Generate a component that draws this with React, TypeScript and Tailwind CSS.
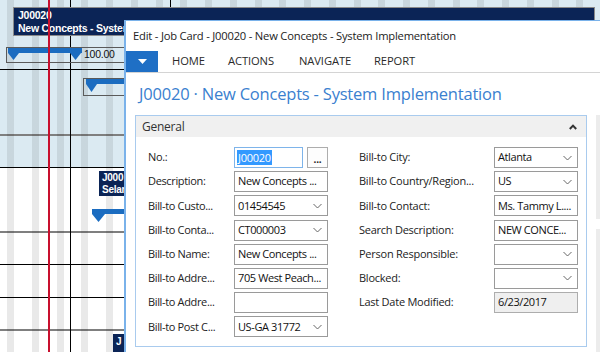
import React from "react";

const font = "font-['Open_Sans',sans-serif]";

type Field = { label: string; value: string; dd?: boolean; ro?: boolean; sel?: boolean };

const leftFields: Field[] = [
  { label: "No.:", value: "J00020", sel: true },
  { label: "Description:", value: "New Concepts ..." },
  { label: "Bill-to Custo...", value: "01454545", dd: true },
  { label: "Bill-to Conta...", value: "CT000003", dd: true },
  { label: "Bill-to Name:", value: "New Concepts ..." },
  { label: "Bill-to Addre...", value: "705 West Peach..." },
  { label: "Bill-to Addre...", value: "" },
  { label: "Bill-to Post C...", value: "US-GA 31772", dd: true },
];

const rightFields: Field[] = [
  { label: "Bill-to City:", value: "Atlanta", dd: true },
  { label: "Bill-to Country/Region...", value: "US", dd: true },
  { label: "Bill-to Contact:", value: "Ms. Tammy L...." },
  { label: "Search Description:", value: "NEW CONCE..." },
  { label: "Person Responsible:", value: "", dd: true },
  { label: "Blocked:", value: "", dd: true },
  { label: "Last Date Modified:", value: "6/23/2017", ro: true },
];

function Chevron() {
  return (
    <svg width="9" height="6" viewBox="0 0 9 6" className="shrink-0">
      <path d="M0.5 1 L4.5 5 L8.5 1" fill="none" stroke="#666" strokeWidth="1" />
    </svg>
  );
}

function Input({ f, width }: { f: Field; width: string }) {
  if (f.sel) {
    return (
      <div className="flex items-center gap-[4px]">
        <div className="flex h-[21px] w-[69px] items-center border border-[#7eb4ea] bg-white pl-[2px]">
          <span className="bg-[#3399ff] px-[1px] leading-[15px] text-white">{f.value}</span>
        </div>
        <div className="flex h-[21px] w-[21px] items-end justify-center border border-[#adadad] bg-[#fdfdfd] pb-[3px] text-[10px] font-bold leading-none text-[#222]">
          ...
        </div>
      </div>
    );
  }
  return (
    <div
      className={`flex h-[21px] items-center justify-between overflow-hidden border pl-[3px] pr-[5px] ${width} ${
        f.ro ? "border-[#adadad] bg-[#efefef]" : "border-[#9a9a9a] bg-white"
      }`}
    >
      <span className="whitespace-nowrap tracking-[-0.4px] text-[#111]">{f.value}</span>
      {f.dd && <Chevron />}
    </div>
  );
}

function Gantt() {
  return (
    <div className="absolute inset-0">
      <div className="flex flex-col">
        <div className="h-[70px] border-b border-black bg-[#dbeaf2]" />
        <div className="h-[66px] border-b-2 border-[#7f7f7f] bg-[#dbeaf2]" />
        <div className="h-[32px] border-b border-black bg-[#dbeaf2]" />
        <div className="h-[65px] border-b-2 border-[#7f7f7f] bg-white" />
        <div className="h-[32px] border-b border-black bg-white" />
        <div className="h-[33px] border-b border-black bg-white" />
        <div className="h-[33px] border-b-2 border-[#7f7f7f] bg-white" />
        <div className="h-[30px] bg-white" />
      </div>
      {/* day stripes */}
      <div className="absolute inset-0 bg-[image:repeating-linear-gradient(90deg,transparent_0_7px,rgba(0,0,0,0.085)_7px_14px,transparent_14px_24.75px)]" />
      {/* grid lines */}
      <div className="absolute left-[70px] top-0 bottom-0 w-px bg-black" />
      <div className="absolute left-[170px] top-0 bottom-0 w-px bg-black" />

      {/* job label */}
      <div className="absolute left-[13px] top-[7px] h-[29px] w-[582px] border border-[#8a8a8a] bg-[#0b2456] px-[4px] pt-[1px] font-['Liberation_Sans',sans-serif] text-[10.5px] font-bold leading-[13px] text-white">
        <div>J00020</div>
        <div className="w-[106px] overflow-hidden whitespace-nowrap">New Concepts - System Implementation</div>
      </div>

      {/* bar 1 */}
      <div className="absolute left-[6px] top-[47px] h-[16px] w-[140px] border border-[#5a5a5a]" />
      <svg className="absolute left-[8px] top-[48px]" width="74" height="13" viewBox="0 0 74 13">
        <rect x="0" y="0" width="74" height="5" fill="#1b6cc0" />
        <polygon points="0,5 11,5 5.5,12" fill="#1b6cc0" />
        <polygon points="62,5 73,5 67.5,12" fill="#1b6cc0" />
      </svg>
      <div className="absolute left-[84px] top-[48px] font-['Liberation_Sans',sans-serif] text-[10.5px] leading-[13px] text-[#111]">
        100.00
      </div>

      {/* bar 2 */}
      <div className="absolute left-[83px] top-[78px] h-[18px] w-[60px] border border-[#5a5a5a]" />
      <svg className="absolute left-[86px] top-[79px]" width="40" height="14" viewBox="0 0 40 14">
        <rect x="0" y="0" width="40" height="5" fill="#1b6cc0" />
        <polygon points="0,5 11,5 5.5,13" fill="#1b6cc0" />
      </svg>

      {/* job 2 */}
      <div className="absolute left-[99px] top-[171px] h-[25px] w-[25px] overflow-hidden whitespace-nowrap bg-[#0b2456] pl-[3px] pt-[1px] font-['Liberation_Sans',sans-serif] text-[10px] font-bold leading-[12px] text-white">
        <div>J000</div>
        <div>Selan</div>
      </div>
      <svg className="absolute left-[92px] top-[209px]" width="40" height="14" viewBox="0 0 40 14">
        <rect x="0" y="0" width="40" height="5" fill="#1b6cc0" />
        <polygon points="0,5 13,5 6.5,13" fill="#1b6cc0" />
      </svg>

      {/* job 3 */}
      <div className="absolute left-[113px] top-[334px] h-[22px] w-[11px] overflow-hidden whitespace-nowrap bg-[#0b2456] pl-[3px] pt-[2px] font-['Liberation_Sans',sans-serif] text-[10px] font-bold leading-[12px] text-white">
        <div>J</div>
      </div>

      {/* today line */}
      <div className="absolute left-[48px] top-0 bottom-0 w-[2px] bg-[#c8102e]" />
    </div>
  );
}

export default function App() {
  return (
    <div className={`relative h-[352px] w-[600px] overflow-hidden bg-white ${font} text-[11px] tracking-[-0.25px] text-[#222]`}>
      <Gantt />

      {/* Job card window */}
      <div className="absolute left-[124px] top-[20px] right-0 bottom-0 flex flex-col border-l-2 border-t border-[#7ab2ea] bg-white">
        <div className="flex h-[30px] items-center pl-[7px] pt-[1px] text-[11.2px] tracking-[-0.2px] text-[#222]">
          Edit - Job Card - J00020 - New Concepts - System Implementation
        </div>

        <div className="flex h-[22px] items-stretch border-b border-[#d4d4d4]">
          <div className="flex w-[32px] items-center justify-center bg-[#1f6fc5]">
            <svg width="9" height="5" viewBox="0 0 9 5">
              <polygon points="0,0 9,0 4.5,5" fill="#fff" />
            </svg>
          </div>
          <div className="flex items-center pl-[14px] text-[11.2px] uppercase tracking-[-0.1px] text-[#2a2a2a]">
            <span className="w-[56px]">Home</span>
            <span className="w-[71px]">Actions</span>
            <span className="w-[75px]">Navigate</span>
            <span>Report</span>
          </div>
        </div>

        <div className="flex flex-1">
          <div className="flex flex-col pl-[9px]">
            <div className="flex h-[42px] items-center pl-[4px] text-[16.5px] tracking-[-0.2px] text-[#3a80cf]">
              J00020 · New Concepts - System Implementation
            </div>
            <div className="h-[232px] w-[452px] border border-[#a9cbee]">
              <div className="flex h-[21px] items-center justify-between bg-[#f0f0f0] pl-[6px] pr-[9px] text-[12px] text-[#333]">
                <span>General</span>
                <svg width="8" height="6" viewBox="0 0 8 6">
                  <path d="M0.8 5 L4 1.6 L7.2 5" fill="none" stroke="#333" strokeWidth="2" />
                </svg>
              </div>
              <div className="flex pl-[12px] pt-[10px]">
                <div className="flex flex-col gap-[3.2px]">
                  {leftFields.map((f, i) => (
                    <div key={i} className="flex items-center">
                      <span className="w-[86px] shrink-0 whitespace-nowrap tracking-[-0.35px]">{f.label}</span>
                      <Input f={f} width="w-[94px]" />
                    </div>
                  ))}
                </div>
                <div className="ml-[31px] flex flex-col gap-[3.2px]">
                  {rightFields.map((f, i) => (
                    <div key={i} className="flex items-center">
                      <span className="w-[135px] shrink-0 whitespace-nowrap">{f.label}</span>
                      <Input f={f} width="w-[84px]" />
                    </div>
                  ))}
                </div>
              </div>
            </div>
          </div>
          <div className="ml-[9px] flex flex-1 flex-col gap-[10px] pt-[42px]">
            <div className="h-[104px] bg-[#ececec]" />
            <div className="flex-1 bg-[#ececec]" />
          </div>
        </div>
      </div>
    </div>
  );
}
